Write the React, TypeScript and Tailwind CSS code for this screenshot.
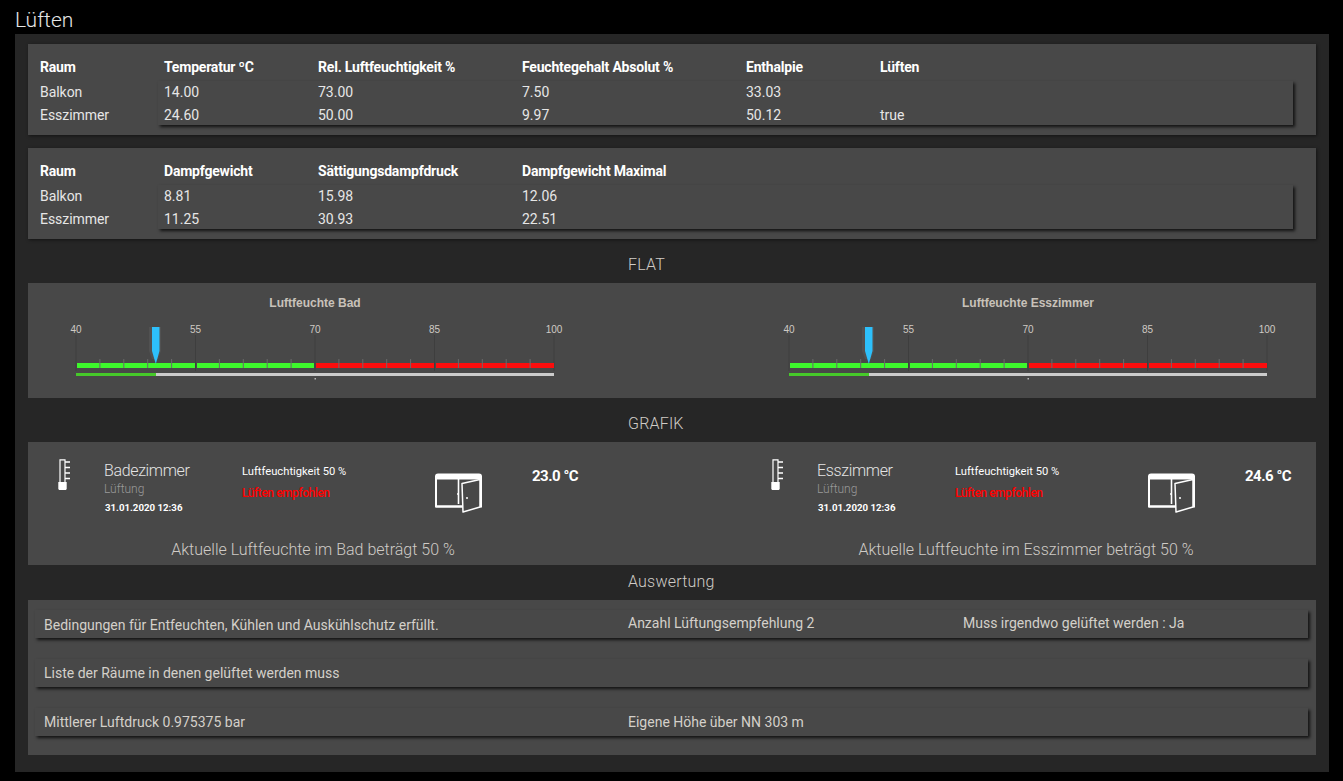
const table1 = {
  cols: ["Temperatur ºC", "Rel. Luftfeuchtigkeit %", "Feuchtegehalt Absolut %", "Enthalpie", "Lüften"],
  rows: [
    { room: "Balkon", values: ["14.00", "73.00", "7.50", "33.03", ""] },
    { room: "Esszimmer", values: ["24.60", "50.00", "9.97", "50.12", "true"] },
  ],
};

const table2 = {
  cols: ["Dampfgewicht", "Sättigungsdampfdruck", "Dampfgewicht Maximal", "", ""],
  rows: [
    { room: "Balkon", values: ["8.81", "15.98", "12.06", "", ""] },
    { room: "Esszimmer", values: ["11.25", "30.93", "22.51", "", ""] },
  ],
};

const colGrid = "grid grid-cols-[154px_204px_224px_134px_1fr] pl-[6px]";

const DataTable = ({ data }: { data: typeof table1 }) => (
  <div className="flex h-[91px] bg-[#484848] pt-[11px] pl-[12px] shadow-[1px_1px_3px_rgba(0,0,0,0.5)]">
    <div className="w-[118px] text-[14px] leading-[24px] tracking-[-0.05px] text-[#e6e6e6]">
      <div className="font-bold tracking-[-0.2px] text-white">Raum</div>
      {data.rows.map((r, i) => (
        <div key={r.room} className={i === 0 ? "h-[24px] pt-[1px]" : "h-[24px]"}>{r.room}</div>
      ))}
    </div>
    <div className="w-[1135px]">
      <div className={`${colGrid} h-[26px] text-[14px] leading-[24px] font-bold tracking-[-0.2px] text-white`}>
        {data.cols.map((c, i) => (
          <div key={i} className="whitespace-nowrap">{c}</div>
        ))}
      </div>
      <div className="h-[44px] bg-[#484848] shadow-[2px_2px_3px_rgba(0,0,0,0.75)]">
        {data.rows.map((r, n) => (
          <div key={r.room} className={`${colGrid} h-[24px] -translate-y-[2px] text-[14px] leading-[24px] text-[#e6e6e6] ${n === 0 ? "pt-[1px]" : ""}`}>
            {r.values.map((v, i) => (
              <div key={i}>{v}</div>
            ))}
          </div>
        ))}
      </div>
    </div>
  </div>
);

const SectionTitle = ({ children, className }: { children: string; className: string }) => (
  <div className={`pl-[600px] text-[16px] leading-[20px] font-light tracking-[0.2px] text-[#d0ccc6] ${className}`}>
    {children}
  </div>
);

const majors = [48, 167.5, 287, 406.5, 526];
const labels = ["40", "55", "70", "85", "100"];

// the svg box starts at the card's left edge, so x here is screen x minus 28
const Gauge = ({ title }: { title: string }) => {
  const minors: number[] = [];
  for (let i = 0; i < 4; i++) {
    for (let j = 1; j < 5; j++) minors.push(majors[i] + j * 23.9);
  }
  return (
    <svg width="574" height="115" viewBox="0 0 574 115" className="block">
      <text x="287" y="23.5" textAnchor="middle" fontSize="12" fontWeight="700" fontFamily="Liberation Sans, sans-serif" fill="#c8c2ba">
        {title}
      </text>
      {majors.map((m, i) => (
        <g key={m}>
          <line x1={m} x2={m} y1="52" y2="88" stroke="#3e3e3e" strokeWidth="1" />
          <text x={m} y="50" textAnchor="middle" fontSize="10" fontFamily="Liberation Sans, sans-serif" fill="#cfcac4">
            {labels[i]}
          </text>
        </g>
      ))}
      <rect x="49" y="80" width="118" height="5" fill="#3df82c" />
      <rect x="169" y="80" width="117" height="5" fill="#3df82c" />
      <rect x="288" y="80" width="118" height="5" fill="#fb0d0d" />
      <rect x="408" y="80" width="118" height="5" fill="#fb0d0d" />
      {minors.map((m) => (
        <line key={m} x1={m} x2={m} y1="76" y2="85" stroke="#6a6a6a" strokeWidth="1" />
      ))}
      <rect x="48" y="90" width="478" height="3" fill="#cbcbcb" />
      <rect x="48" y="90" width="80" height="3" fill="#46c92a" />
      <rect x="286.5" y="95" width="1.5" height="1.5" fill="#b8b8b8" />
      <path d="M121 44h12v24l-3 8h-6l-3-8z" fill="#ffffff" fillOpacity="0.05" />
      <path d="M124 44h7.500v24l-3.700 13-3.800-13z" fill="#2dc0fb" />
    </svg>
  );
};

const Thermometer = () => (
  <svg width="14" height="32" viewBox="0 0 14 32" className="block">
    <path d="M3 23V.800h5V23" fill="none" stroke="#fff" strokeWidth="1.200" />
    <path d="M8 3h5M8 8.500h5M8 14h5M8 19.500h5" stroke="#fff" strokeWidth="1.400" />
    <path d="M1.300 23h8.400v7l-.8 1h-6.800l-.8-1z" fill="#fff" />
  </svg>
);

const DoorIcon = () => (
  <svg width="48" height="40" viewBox="0 0 48 40" className="block">
    <path d="M1 3.500c0-1 .8-2 2-2h41c1.200 0 2 1 2 2v30h-45z" fill="none" stroke="#fff" strokeWidth="2" />
    <rect x="1" y="1.500" width="45" height="5" fill="#fff" rx="1" />
    <path d="M23.500 6v25" stroke="#fff" strokeWidth="1.600" />
    <path d="M27 10.500 45 6.500v27.500l-17 5z" fill="#484848" stroke="#fff" strokeWidth="1.500" strokeLinejoin="round" />
    <path d="M1 33.500h27" stroke="#fff" strokeWidth="2" />
    <circle cx="23" cy="21" r="1" fill="#fff" />
    <circle cx="32" cy="25" r="1" fill="#fff" />
  </svg>
);

const RoomTile = ({ room, temp, footer }: { room: string; temp: string; footer: string }) => (
  <div className="h-[123px] w-[574px]">
    <div className="grid h-[84px] grid-cols-[47px_138px_193px_97px_1fr] pl-[29px]">
      <div className="pt-[17px]">
        <Thermometer />
      </div>
      <div className="pt-[19px]">
        <div className="text-[16px] leading-[20px] font-light tracking-[-0.35px] text-[#e4e4e4]">{room}</div>
        <div className="text-[12px] leading-[16px] font-light text-[#9a9a9a]">Lüftung</div>
        <div className="mt-[4px] pl-[1px] text-[9.700px] leading-[14px] font-bold text-white">31.01.2020 12:36</div>
      </div>
      <div className="pt-[22px]">
        <div className="text-[11.200px] leading-[16px] text-white">Luftfeuchtigkeit 50 %</div>
        <div className="mt-[5px] text-[12px] leading-[16px] font-medium tracking-[-0.45px] text-[#ff0000]">Lüften empfohlen</div>
      </div>
      <div className="pt-[31px]">
        <DoorIcon />
      </div>
      <div className="pt-[24px] text-[15px] leading-[20px] font-bold tracking-[-0.5px] text-white">{temp}</div>
    </div>
    <div className="mt-[14px] pr-[4px] text-center text-[16px] leading-[20px] font-light text-[#cfcbc6]">{footer}</div>
  </div>
);

const InfoRow = ({ a, b, c, first }: { a: string; b?: string; c?: string; first?: boolean }) => (
  <div className={`grid h-[28px] w-[1273px] grid-cols-[584px_335px_1fr] bg-[#484848] pl-[9px] text-[14px] text-[#d4d0ca] shadow-[2px_2px_3px_rgba(0,0,0,0.75)] ${first ? "leading-[26px]" : "leading-[28px]"}`}>
    <div className={first ? "pt-[2px] whitespace-nowrap" : "whitespace-nowrap"}>{a}</div>
    <div>{b}</div>
    <div>{c}</div>
  </div>
);

export default function App() {
  return (
    <div className="h-[781px] w-[1343px] overflow-hidden bg-black font-['Roboto',sans-serif]">
      <div className="h-[34px] pl-[15px] text-[21px] leading-[40px] font-light text-[#e6e6e6]">Lüften</div>
      <div className="ml-[15px] h-[738px] w-[1314px] bg-[#262626] px-[13px] pt-[10px]">
        <div className="flex flex-col gap-[13px]">
          <DataTable data={table1} />
          <DataTable data={table2} />
        </div>

        <SectionTitle className="mt-[16px]">FLAT</SectionTitle>
        <div className="mt-[8px] grid h-[115px] grid-cols-[713px_1fr] bg-[#484848]">
          <Gauge title="Luftfeuchte Bad" />
          <Gauge title="Luftfeuchte Esszimmer" />
        </div>

        <SectionTitle className="mt-[16px]">GRAFIK</SectionTitle>
        <div className="mt-[8px] grid h-[123px] grid-cols-[713px_1fr] bg-[#484848]">
          <RoomTile room="Badezimmer" temp="23.0 °C" footer="Aktuelle Luftfeuchte im Bad beträgt 50 %" />
          <RoomTile room="Esszimmer" temp="24.6 °C" footer="Aktuelle Luftfeuchte im Esszimmer beträgt 50 %" />
        </div>

        <SectionTitle className="mt-[7px]">Auswertung</SectionTitle>
        <div className="mt-[8px] flex h-[155px] flex-col gap-[21px] bg-[#484848] pt-[10px] pl-[7px]">
          <InfoRow first a="Bedingungen für Entfeuchten, Kühlen und Auskühlschutz erfüllt." b="Anzahl Lüftungsempfehlung 2" c="Muss irgendwo gelüftet werden : Ja" />
          <InfoRow a="Liste der Räume in denen gelüftet werden muss" />
          <InfoRow a="Mittlerer Luftdruck 0.975375 bar" b="Eigene Höhe über NN 303 m" />
        </div>
      </div>
    </div>
  );
}
